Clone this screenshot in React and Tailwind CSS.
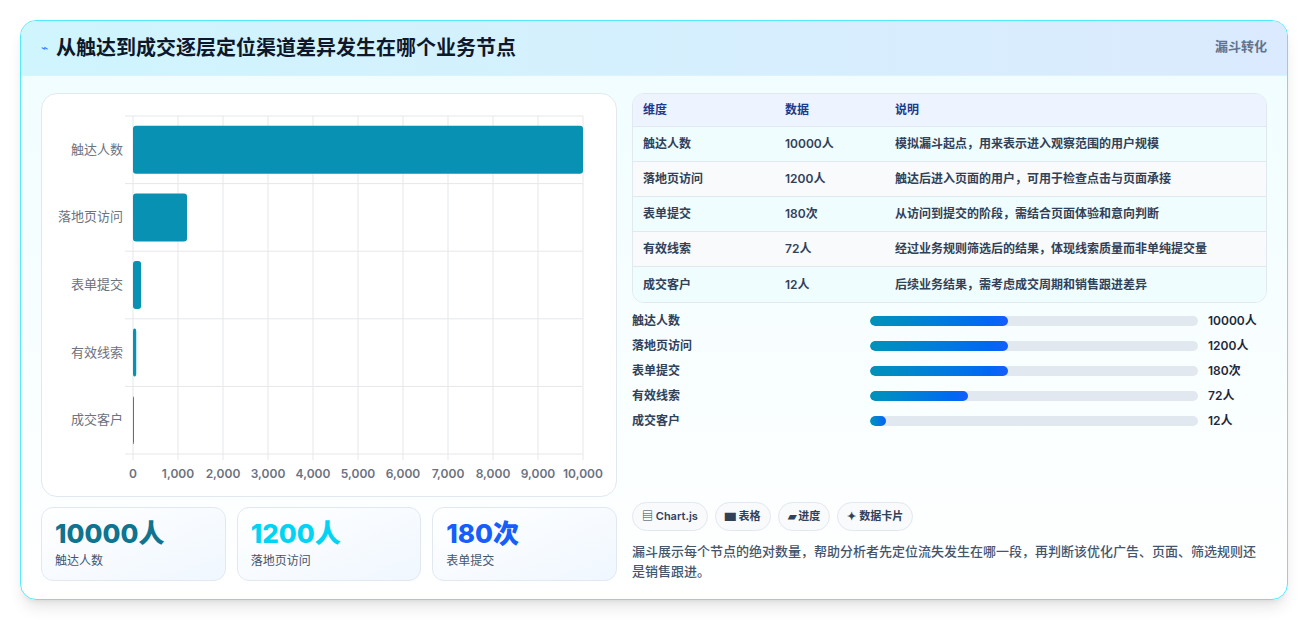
const rows = [
  { name: '触达人数', value: '10000人', note: '模拟漏斗起点，用来表示进入观察范围的用户规模', raw: 10000, pct: 42 },
  { name: '落地页访问', value: '1200人', note: '触达后进入页面的用户，可用于检查点击与页面承接', raw: 1200, pct: 42 },
  { name: '表单提交', value: '180次', note: '从访问到提交的阶段，需结合页面体验和意向判断', raw: 180, pct: 42 },
  { name: '有效线索', value: '72人', note: '经过业务规则筛选后的结果，体现线索质量而非单纯提交量', raw: 72, pct: 30 },
  { name: '成交客户', value: '12人', note: '后续业务结果，需考虑成交周期和销售跟进差异', raw: 12, pct: 5 },
]

function Chart() {
  const x0 = 91, x1 = 541, y0 = 22, rowH = 67.6
  const ticks = [0, 1000, 2000, 3000, 4000, 5000, 6000, 7000, 8000, 9000, 10000]
  return (
    <svg width="576" height="403" className="block">
      {ticks.map((t, i) => {
        const x = x0 + (i * (x1 - x0)) / 10
        return (
          <g key={t}>
            <line x1={x} y1={y0} x2={x} y2={y0 + rowH * 5 + 6} stroke="#e5e7eb" />
            <text x={x} y={384} textAnchor="middle" fontSize="12" fill="#6b7280" fontWeight="600">{t.toLocaleString('en-US')}</text>
          </g>
        )
      })}
      {[0, 1, 2, 3, 4, 5].map(i => (
        <line key={i} x1={x0 - 8} x2={x1} y1={y0 + i * rowH} y2={y0 + i * rowH} stroke="#e5e7eb" />
      ))}
      {rows.map((r, i) => {
        const cy = y0 + i * rowH + rowH / 2
        const w = ((x1 - x0) * r.raw) / 10000
        return (
          <g key={r.name}>
            <text x={x0 - 10} y={cy + 4} textAnchor="end" fontSize="13" fill="#6b7280">{r.name}</text>
            <rect x={x0} y={cy - 24} width={Math.max(w, 1)} height={48} rx="3" fill="#0891b2" />
          </g>
        )
      })}
    </svg>
  )
}

export default function App() {
  return (
    <div className="w-[1309px] h-[620px] bg-white p-5 pr-[21px]" style={{ fontFamily: 'Inter, "Noto Sans CJK SC", sans-serif' }}>
      <div className="h-[580px] rounded-2xl border border-cyan-300 bg-gradient-to-b from-[#effdff] to-white shadow-lg overflow-hidden">
        <div className="h-[55px] flex items-center justify-between px-5 bg-gradient-to-r from-[#cff5fd] to-[#dbeafe] border-b border-cyan-100">
          <div className="flex items-center gap-2">
            <span className="text-blue-500 text-xs">⌁</span>
            <h1 className="text-[20px] font-bold text-[#0f172a]">从触达到成交逐层定位渠道差异发生在哪个业务节点</h1>
          </div>
          <span className="text-[13px] font-bold text-slate-500 self-start mt-4">漏斗转化</span>
        </div>
        <div className="flex gap-[15px] px-5 pt-[17px]">
          <div className="w-[576px]">
            <div className="h-[404px] rounded-2xl border border-slate-200 bg-white"><Chart /></div>
            <div className="grid grid-cols-3 gap-[11px] mt-[10px]">
              {[['10000人', '触达人数', 'text-[#0e7490]'], ['1200人', '落地页访问', 'text-cyan-400'], ['180次', '表单提交', 'text-blue-600']].map(([v, l, c]) => (
                <div key={l} className="h-[74px] rounded-xl border border-slate-200 bg-gradient-to-br from-white to-[#f0f7ff] px-[13px] pt-[10px]">
                  <div className={`text-[26px] font-extrabold leading-8 ${c}`}>{v}</div>
                  <div className="text-[12px] text-slate-600 mt-0.5">{l}</div>
                </div>
              ))}
            </div>
          </div>
          <div className="w-[638px] flex flex-col">
            <div className="rounded-xl border border-slate-200 overflow-hidden text-[12px] font-semibold text-slate-700">
              <div className="flex h-[33px] items-center bg-[#eef4ff] text-[#1e3a8a] border-b border-slate-200">
                <div className="w-[152px] pl-[10px]">维度</div><div className="w-[110px]">数据</div><div>说明</div>
              </div>
              {rows.map((r, i) => (
                <div key={r.name} className={`flex h-[35px] items-center ${i % 2 ? 'bg-slate-50' : 'bg-[#f0fdff]'} ${i < 4 ? 'border-b border-slate-200' : ''}`}>
                  <div className="w-[152px] pl-[10px]">{r.name}</div><div className="w-[110px]">{r.value}</div><div>{r.note}</div>
                </div>
              ))}
            </div>
            <div className="mt-[12px] flex flex-col gap-[13px] text-[12px] font-semibold text-slate-700">
              {rows.map(r => (
                <div key={r.name} className="flex items-center h-3">
                  <div className="w-[238px]">{r.name}</div>
                  <div className="w-[328px] h-[10px] rounded-full bg-slate-200 overflow-hidden">
                    <div className="h-full rounded-full bg-gradient-to-r from-cyan-600 to-blue-600" style={{ width: r.pct + '%' }} />
                  </div>
                  <div className="ml-[10px] text-slate-800">{r.value}</div>
                </div>
              ))}
            </div>
            <div className="mt-[75px] flex gap-[7px] text-[11px] font-semibold text-slate-700">
              {['▤ Chart.js', '▆ 表格', '▰ 进度', '✦ 数据卡片'].map(t => (
                <span key={t} className="h-[29px] px-[9px] flex items-center rounded-full border border-slate-200 bg-slate-50">{t}</span>
              ))}
            </div>
            <p className="mt-[10px] text-[13px] leading-[20px] text-slate-600 font-medium">漏斗展示每个节点的绝对数量，帮助分析者先定位流失发生在哪一段，再判断该优化广告、页面、筛选规则还是销售跟进。</p>
          </div>
        </div>
      </div>
    </div>
  )
}
